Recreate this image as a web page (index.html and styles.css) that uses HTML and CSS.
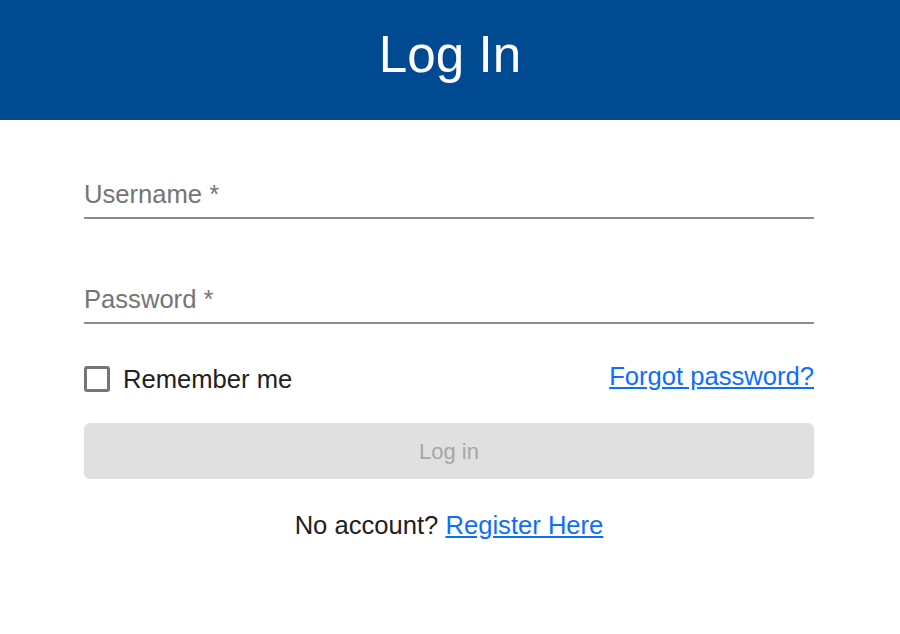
FILE: index.html
```html
<!DOCTYPE html>
<html lang="en">
<head>
    <meta charset="UTF-8">
    <meta name="viewport" content="width=device-width, initial-scale=1.0">
    <title>Log In</title>
    <link rel="stylesheet" href="styles.css">
</head>
<body>

    <!-- Top bar -->
    <header class="topbar">
        <h1>Log In</h1>
    </header>

    <!-- Login form -->
    <form class="login-form" onsubmit="return false;">
        <div class="field field-user">
            <input type="text" id="username" placeholder="Username *" required>
        </div>
        <div class="field">
            <input type="password" id="password" placeholder="Password *" required>
        </div>

        <div class="options-row">
            <label class="remember">
                <input type="checkbox" id="remember">
                <span>Remember me</span>
            </label>
            <a href="#" class="link forgot">Forgot password?</a>
        </div>

        <button type="submit" class="login-btn" disabled>Log in</button>

        <p class="register">No account? <a href="#" class="link">Register Here</a></p>
    </form>

</body>
</html>
```

FILE: styles.css
```css
/* Basic Reset & Font */
html, body {
    margin: 0;
    padding: 0;
    font-family: "Liberation Sans", Arial, sans-serif;
    background-color: #fff;
    color: #212121;
}

/* Header bar */
.topbar {
    background-color: #004a91;
    height: 120px;
    display: flex;
    align-items: center;
    justify-content: center;
}

.topbar h1 {
    margin: 0;
    color: #fff;
    font-size: 51.2px;
    font-weight: normal;
    line-height: 1;
    padding-bottom: 11px;
}

/* Form */
.login-form {
    display: flex;
    flex-direction: column;
    padding: 51px 86px 0 84px;
}

.field input {
    display: block;
    width: 100%;
    box-sizing: border-box;
    font-family: inherit;
    font-size: 25.6px;
    line-height: 30px;
    height: 48px;
    padding: 8px 0;
    border: none;
    border-bottom: 2px solid #8c8c8c;
    outline: none;
    color: #212121;
    background: transparent;
}

.field input::placeholder {
    color: #757575;
    opacity: 1;
}

.field-user {
    margin-bottom: 57px;
}

/* Remember / forgot row */
.options-row {
    margin-top: 34px;
    height: 40px;
    display: flex;
    align-items: center;
    justify-content: space-between;
}

.remember {
    display: flex;
    align-items: center;
    gap: 13px;
    font-size: 25.6px;
    cursor: pointer;
    padding-top: 2px;
}

.remember input {
    appearance: none;
    -webkit-appearance: none;
    margin: 0;
    width: 26px;
    height: 26px;
    box-sizing: border-box;
    border: 3px solid #757575;
    border-radius: 3px;
    background: #fff;
}

.link {
    color: #0d6efd;
    font-size: 25.6px;
    text-decoration: underline;
}

.forgot {
    margin-bottom: 3px;
}

/* Submit button */
.login-btn {
    margin-top: 25px;
    height: 56px;
    padding-top: 3px;
    border: none;
    border-radius: 6px;
    background-color: #e0e0e0;
    color: #a6a6a6;
    font-family: inherit;
    font-size: 22px;
}

.register {
    margin: 31px 0 0;
    text-align: center;
    font-size: 25.6px;
    line-height: 30px;
}
```
